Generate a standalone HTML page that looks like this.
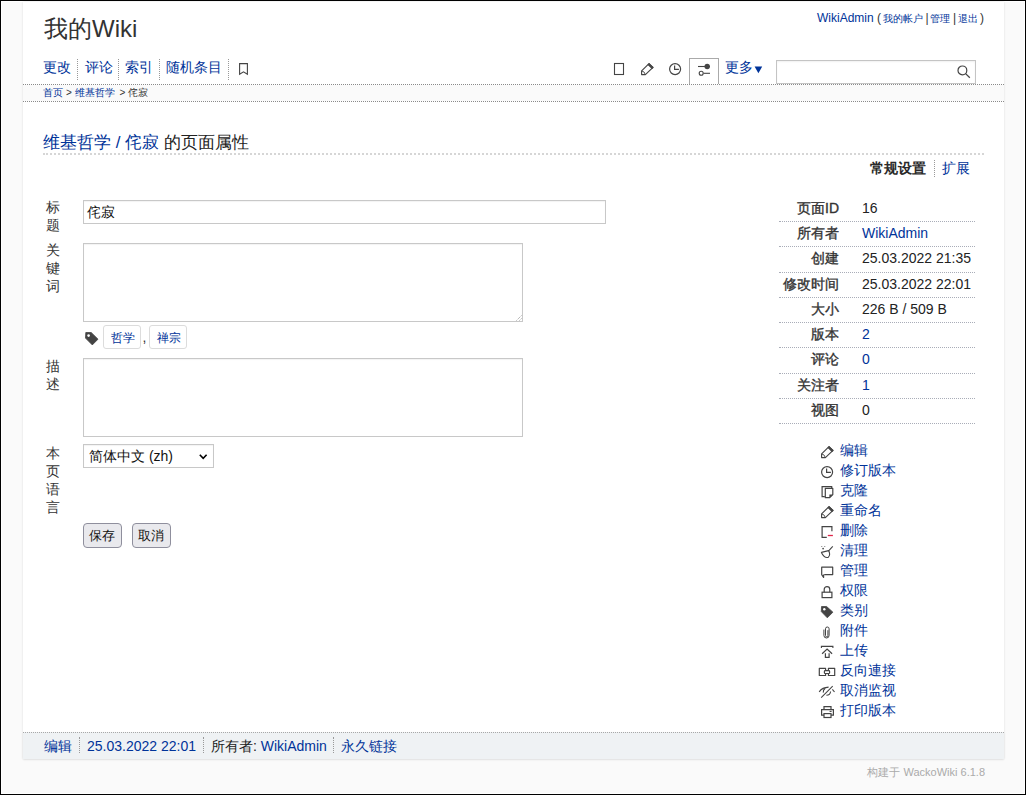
<!DOCTYPE html>
<html lang="zh">
<head>
<meta charset="utf-8">
<title>我的Wiki</title>
<style>
html,body{margin:0;padding:0;}
body{position:relative;width:1026px;height:795px;overflow:hidden;background:#000;font-family:"Liberation Sans",sans-serif;font-size:14px;color:#333;}
#frame{position:absolute;left:1px;top:1px;width:1024px;height:793px;background:#fff;}
#bodybg{position:absolute;left:2px;top:2px;width:1022px;height:791px;background:#fafafa;}
#page{position:absolute;left:23px;top:2px;width:981px;height:757px;background:#fff;box-shadow:0 0 2px rgba(0,0,0,0.12);}
a{color:#039;text-decoration:none;}
.t{position:absolute;white-space:nowrap;}
.vsep{position:absolute;width:0;border-left:1px dotted #999;}
.hdot{position:absolute;height:0;border-top:1px dotted #8a8a8a;}
svg{position:absolute;overflow:visible;}
.ic{fill:none;stroke:#444;stroke-width:1.1;}
.lbl{font-size:14px;line-height:20px;color:#333;-webkit-text-stroke:0.35px #333;}
.val{font-size:14px;line-height:20px;color:#222;}
.tdot{position:absolute;left:779px;width:196px;height:0;border-top:1px dotted #a9adb8;}
</style>
</head>
<body>
<div id="frame"></div>
<div id="bodybg"></div>
<div id="page"></div>
<svg width="0" height="0" style="position:absolute;left:0;top:0">
<defs>
<symbol id="i-pencil" viewBox="0 0 13 13" overflow="visible"><path d="M0.6 11.6V7.9L8 0.6L12 4.4L4.4 11.6Z" fill="none" stroke="#444" stroke-width="1.15" stroke-linejoin="round"/><path d="M6.9 1.7L8 0.4L12.3 4.5L11 5.7Z" fill="#444" stroke="#444" stroke-width="0.8"/><path d="M1 8.1Q3.6 8.4 4.1 11.2" fill="none" stroke="#444" stroke-width="0.9"/></symbol>
<symbol id="i-clock" viewBox="0 0 13 13" overflow="visible"><circle cx="6.1" cy="6.1" r="5.5" fill="none" stroke="#444" stroke-width="1.2"/><path d="M5.6 2.4V6.4H9.9" fill="none" stroke="#444" stroke-width="1.2"/></symbol>
<symbol id="i-clone" viewBox="0 0 13 13" overflow="visible"><path d="M3.8 10.7H1.1V0.6H10.7V2.4" fill="none" stroke="#444" stroke-width="1.2"/><path d="M4.3 2.4H11.8V8.6L8.7 11.7H4.3Z" fill="#fff" stroke="#444" stroke-width="1.2" stroke-linejoin="round"/><path d="M8.4 11.9V8.4H12Z" fill="#444"/></symbol>
<symbol id="i-del" viewBox="0 0 13 13" overflow="visible"><path d="M5.8 11.3H1.1V0.6H10.9V5.3" fill="none" stroke="#444" stroke-width="1.2"/><path d="M6.8 9.5H11.9" stroke="#e0264a" stroke-width="1.3"/></symbol>
<symbol id="i-purge" viewBox="0 0 13 13" overflow="visible"><path d="M0.4 6.4L7.6 4.6Q9.8 8.4 7.4 11.2Q3.4 12.6 0.4 6.4Z" fill="none" stroke="#444" stroke-width="1.1" stroke-linejoin="round"/><path d="M7.6 4.8L11.8 0.4" stroke="#444" stroke-width="1.1"/><circle cx="0.8" cy="0.5" r="0.55" fill="#666"/><circle cx="3.8" cy="0.5" r="0.55" fill="#666"/><circle cx="2.1" cy="2.6" r="0.85" fill="#444"/></symbol>
<symbol id="i-manage" viewBox="0 0 13 13" overflow="visible"><path d="M3.3 8.6H11.7V1.2H0.7V8.6L2.6 11.4V8.6" fill="none" stroke="#444" stroke-width="1.2" stroke-linejoin="round"/></symbol>
<symbol id="i-lock" viewBox="0 0 13 13" overflow="visible"><path d="M3.2 6.2V3.4A2.8 2.8 0 0 1 8.8 3.4V6.2" fill="none" stroke="#444" stroke-width="1.2"/><rect x="1.1" y="6.2" width="9.8" height="5.4" fill="none" stroke="#444" stroke-width="1.2"/></symbol>
<symbol id="i-tag" viewBox="0 0 13 13" overflow="visible"><path d="M0.5 0.5H5.6L11.9 6.2L6.3 11.8L0.3 5.6Z" fill="#444" stroke="#444" stroke-width="0.8" stroke-linejoin="round"/><circle cx="3.3" cy="3.3" r="1.2" fill="#fff"/></symbol>
<symbol id="i-clip" viewBox="0 0 13 13" overflow="visible"><path d="M6.9 4.2V9.6A1.2 1.2 0 0 1 4.5 9.6V2.8A1.8 1.8 0 0 1 8.1 2.8V9.4A2.6 2.6 0 0 1 2.9 9.4V3.6" fill="none" stroke="#444" stroke-width="1"/></symbol>
<symbol id="i-upload" viewBox="0 0 13 13" overflow="visible"><path d="M0.4 2.1V0.4H11.9V2.1" fill="none" stroke="#444" stroke-width="1.1"/><path d="M1.1 7.7L6.1 3L11.1 7.7" fill="none" stroke="#444" stroke-width="1.2"/><path d="M4.4 7.2V11.4H8.1V7.2" fill="none" stroke="#444" stroke-width="1.2"/></symbol>
<symbol id="i-links" viewBox="0 0 13 13" overflow="visible"><path d="M4.6 4.5V2.4H-1.7V9.5H4.6V7.6" fill="none" stroke="#444" stroke-width="1.2" stroke-linejoin="round"/><rect x="3.4" y="4.6" width="5.2" height="2.9" rx="0.8" fill="none" stroke="#444" stroke-width="1.2"/><path d="M7.4 4.5V2.4H13.7V9.5H7.4V7.6" fill="none" stroke="#444" stroke-width="1.2" stroke-linejoin="round"/></symbol>
<symbol id="i-eye" viewBox="0 0 13 13" overflow="visible"><path d="M0.2 11.7L11.7 0.2" stroke="#444" stroke-width="1.1"/><path d="M-1.8 5.8Q1.4 1.5 7.6 1.2" fill="none" stroke="#444" stroke-width="1.2"/><path d="M2.3 6.6Q2 3.9 4.2 2.2" fill="none" stroke="#444" stroke-width="1.1"/><path d="M5.4 9.3Q9.2 9.2 9.6 5.5" fill="none" stroke="#444" stroke-width="1.1"/><path d="M11.4 3.4L13.5 6" stroke="#444" stroke-width="1.1"/></symbol>
<symbol id="i-print" viewBox="0 0 13 13" overflow="visible"><path d="M3 3.3V0.6H10V3.3" fill="none" stroke="#444" stroke-width="1.2"/><path d="M3 9.2H0.6V3.6H12.4V9.2H10" fill="none" stroke="#444" stroke-width="1.2"/><rect x="3" y="7.6" width="7" height="3.9" fill="none" stroke="#444" stroke-width="1.2"/><path d="M8.6 5.4H10.6" stroke="#444" stroke-width="1.1"/></symbol>
</defs>
</svg>


<!-- ===== header ===== -->
<div class="t" style="left:44px;top:14px;font-size:24px;line-height:30px;color:#333;">我的Wiki</div>
<div class="t" style="left:817px;top:9px;font-size:12px;line-height:18px;"><a href="#">WikiAdmin</a></div>
<div class="t" style="left:877px;top:9px;font-size:12px;line-height:18px;color:#333;">(</div>
<div class="t" style="left:883px;top:10px;font-size:10px;line-height:18px;"><a href="#">我的帐户</a></div>
<div class="t" style="left:925.5px;top:9px;font-size:12px;line-height:18px;color:#333;">|</div>
<div class="t" style="left:930px;top:10px;font-size:10px;line-height:18px;"><a href="#">管理</a></div>
<div class="t" style="left:953px;top:9px;font-size:12px;line-height:18px;color:#333;">|</div>
<div class="t" style="left:957.5px;top:10px;font-size:10px;line-height:18px;"><a href="#">退出</a></div>
<div class="t" style="left:980px;top:9px;font-size:12px;line-height:18px;color:#333;">)</div>

<!-- nav left -->
<div class="t" style="left:43px;top:57px;font-size:14px;line-height:20px;"><a href="#">更改</a></div>
<div class="vsep" style="left:77px;top:59px;height:21px;"></div>
<div class="t" style="left:85px;top:57px;font-size:14px;line-height:20px;"><a href="#">评论</a></div>
<div class="vsep" style="left:118px;top:59px;height:21px;"></div>
<div class="t" style="left:125px;top:57px;font-size:14px;line-height:20px;"><a href="#">索引</a></div>
<div class="vsep" style="left:159px;top:59px;height:21px;"></div>
<div class="t" style="left:166px;top:57px;font-size:14px;line-height:20px;"><a href="#">随机条目</a></div>
<div class="vsep" style="left:228px;top:59px;height:21px;"></div>
<svg style="left:239px;top:63px" width="9" height="12" viewBox="0 0 9 12"><path class="ic" d="M0.6 0.6H8.4V11.3L4.5 8.8L0.6 11.3Z"/></svg>

<!-- nav right icons -->
<svg style="left:614px;top:63px" width="11" height="12" viewBox="0 0 11 12"><rect x="0.5" y="0.5" width="9" height="11" fill="none" stroke="#444" stroke-width="1.1"/></svg>
<svg style="left:641px;top:63px" width="13" height="13" viewBox="0 0 13 13"><use href="#i-pencil"/></svg>
<svg style="left:669px;top:63px" width="13" height="13" viewBox="0 0 13 13"><use href="#i-clock"/></svg>
<div style="position:absolute;left:689px;top:58px;width:28px;height:25px;border:1px solid #aaa;border-bottom:none;background:#fff;"></div>
<svg style="left:697px;top:63px" width="15" height="13" viewBox="0 0 15 13"><path class="ic" d="M1 3.5H13"/><circle cx="10.2" cy="3.5" r="2.7" fill="#444"/><path class="ic" d="M6.5 10.3H13"/><circle class="ic" cx="4.2" cy="10.3" r="2.0" fill="#fff"/></svg>
<div class="t" style="left:725px;top:57px;font-size:14px;line-height:20px;"><a href="#">更多</a></div>
<svg style="left:754px;top:66px" width="9" height="8" viewBox="0 0 9 8"><path d="M0.6 0.4H8.2L4.4 7.2Z" fill="#039"/></svg>
<div style="position:absolute;left:776px;top:60px;width:198px;height:22px;border:1px solid #c4c4c4;background:#fff;box-shadow:inset 0 1px 2px rgba(0,0,0,0.06);"></div>
<svg style="left:957px;top:65px" width="14" height="14" viewBox="0 0 14 14"><circle class="ic" cx="5.4" cy="5.4" r="4.4" style="stroke-width:1.2"/><path class="ic" d="M8.6 8.6L12.8 12.8" style="stroke-width:1.3"/></svg>

<div class="hdot" style="left:23px;top:84px;width:981px;"></div>
<div style="position:absolute;left:23px;top:85px;width:981px;height:16px;background:#fafafa;"></div>
<div class="hdot" style="left:23px;top:101px;width:981px;"></div>
<div class="t" style="left:42.5px;top:85px;font-size:10px;line-height:16px;"><a href="#">首页</a></div>
<div class="t" style="left:66px;top:85px;font-size:10px;line-height:16px;color:#333;">&gt;</div>
<div class="t" style="left:74.5px;top:85px;font-size:10px;line-height:16px;"><a href="#">维基哲学</a></div>
<div class="t" style="left:119.5px;top:85px;font-size:10px;line-height:16px;color:#333;">&gt;</div>
<div class="t" style="left:127.5px;top:85px;font-size:10px;line-height:16px;color:#333;">侘寂</div>

<!-- ===== title ===== -->
<div class="t" style="left:43px;top:132px;font-size:17px;line-height:22px;color:#222;"><a href="#">维基哲学</a> <a href="#">/</a> <a href="#">侘寂</a> 的页面属性</div>
<div style="position:absolute;left:43px;top:153px;width:941px;height:0;border-top:2px dotted #d6d6d6;"></div>

<!-- tabs -->
<div class="t" style="left:870px;top:158px;font-size:14px;line-height:20px;color:#2a2a2a;font-weight:bold;">常规设置</div>
<div class="vsep" style="left:934px;top:160px;height:17px;"></div>
<div class="t" style="left:942px;top:158px;font-size:14px;line-height:20px;"><a href="#">扩展</a></div>

<!-- ===== form ===== -->
<div class="t" style="left:46px;top:198px;font-size:14px;line-height:18.3px;color:#333;white-space:normal;width:16px;">标题</div>
<div style="position:absolute;left:83px;top:200px;width:521px;height:22px;border:1px solid #c8c8c8;background:#fff;box-shadow:inset 0 1px 1px rgba(0,0,0,0.05);"></div>
<div class="t" style="left:87px;top:202px;font-size:14px;line-height:20px;color:#111;">侘寂</div>

<div class="t" style="left:46px;top:240.5px;font-size:14px;line-height:18.3px;color:#333;white-space:normal;width:16px;">关键词</div>
<div style="position:absolute;left:83px;top:243px;width:438px;height:77px;border:1px solid #c8c8c8;background:#fff;box-shadow:inset 0 1px 1px rgba(0,0,0,0.05);"></div>

<svg style="left:515px;top:314px" width="8" height="8" viewBox="0 0 8 8"><path d="M1.5 6.5L6.5 1.5M4.5 6.5L6.5 4.5" stroke="#888" stroke-width="0.9" stroke-dasharray="1 1"/></svg>
<svg style="left:515px;top:429px" width="8" height="8" viewBox="0 0 8 8"><path d="M1.5 6.5L6.5 1.5M4.5 6.5L6.5 4.5" stroke="#888" stroke-width="0.9" stroke-dasharray="1 1"/></svg>
<svg style="left:84.5px;top:332px" width="14" height="14" viewBox="0 0 14 14"><path d="M0.8 0.5H6.2L13 7.2L7.3 12.9L0.5 6.1Z" fill="#444" stroke="#444" stroke-width="0.8" stroke-linejoin="round"/><circle cx="3.6" cy="3.6" r="1.3" fill="#fff"/></svg>
<div style="position:absolute;left:103px;top:325px;width:36px;height:22px;border:1px solid #dcdcdc;border-radius:3px;background:#fff;"></div>
<div class="t" style="left:110.5px;top:328px;font-size:12px;line-height:20px;"><a href="#">哲学</a></div>
<div class="t" style="left:142.5px;top:327px;font-size:14px;line-height:20px;color:#333;">,</div>
<div style="position:absolute;left:149px;top:325px;width:36px;height:22px;border:1px solid #dcdcdc;border-radius:3px;background:#fff;"></div>
<div class="t" style="left:156.5px;top:328px;font-size:12px;line-height:20px;"><a href="#">禅宗</a></div>

<div class="t" style="left:46px;top:356.5px;font-size:14px;line-height:18.3px;color:#333;white-space:normal;width:16px;">描述</div>
<div style="position:absolute;left:83px;top:358px;width:438px;height:77px;border:1px solid #c8c8c8;background:#fff;box-shadow:inset 0 1px 1px rgba(0,0,0,0.05);"></div>

<div class="t" style="left:46px;top:444px;font-size:14px;line-height:18.1px;color:#333;white-space:normal;width:16px;">本页语言</div>
<div style="position:absolute;left:83px;top:444px;width:129px;height:22px;border:1px solid #c8c8c8;background:#fff;box-shadow:inset 0 1px 1px rgba(0,0,0,0.05);"></div>
<div class="t" style="left:89px;top:446px;font-size:14px;line-height:20px;color:#111;">简体中文 (zh)</div>
<svg style="left:199px;top:453.5px" width="9" height="6" viewBox="0 0 9 6"><path d="M0.8 0.8L4.2 4.3L7.6 0.8" fill="none" stroke="#000" stroke-width="1.6"/></svg>

<div style="position:absolute;left:83px;top:523px;width:37px;height:23px;border:1px solid #8f8f9d;border-radius:4px;background:#e9e9ed;"></div>
<div class="t" style="left:89px;top:526px;font-size:13.33px;line-height:20px;color:#111;">保存</div>
<div style="position:absolute;left:132px;top:523px;width:37px;height:23px;border:1px solid #8f8f9d;border-radius:4px;background:#e9e9ed;"></div>
<div class="t" style="left:138px;top:526px;font-size:13.33px;line-height:20px;color:#111;">取消</div>

<!-- ===== info table ===== -->
<div class="t lbl" style="right:187px;top:197.75px;">页面ID</div>
<div class="t val" style="left:862px;top:197.75px;">16</div>
<div class="tdot" style="top:221.00px;"></div>
<div class="t lbl" style="right:187px;top:223.00px;">所有者</div>
<div class="t val" style="left:862px;top:223.00px;"><a href="#">WikiAdmin</a></div>
<div class="tdot" style="top:246.25px;"></div>
<div class="t lbl" style="right:187px;top:248.25px;">创建</div>
<div class="t val" style="left:862px;top:248.25px;">25.03.2022 21:35</div>
<div class="tdot" style="top:271.50px;"></div>
<div class="t lbl" style="right:187px;top:273.50px;">修改时间</div>
<div class="t val" style="left:862px;top:273.50px;">25.03.2022 22:01</div>
<div class="tdot" style="top:296.75px;"></div>
<div class="t lbl" style="right:187px;top:298.75px;">大小</div>
<div class="t val" style="left:862px;top:298.75px;">226 B / 509 B</div>
<div class="tdot" style="top:322.00px;"></div>
<div class="t lbl" style="right:187px;top:324.00px;">版本</div>
<div class="t val" style="left:862px;top:324.00px;"><a href="#">2</a></div>
<div class="tdot" style="top:347.25px;"></div>
<div class="t lbl" style="right:187px;top:349.25px;">评论</div>
<div class="t val" style="left:862px;top:349.25px;"><a href="#">0</a></div>
<div class="tdot" style="top:372.50px;"></div>
<div class="t lbl" style="right:187px;top:374.50px;">关注者</div>
<div class="t val" style="left:862px;top:374.50px;"><a href="#">1</a></div>
<div class="tdot" style="top:397.75px;"></div>
<div class="t lbl" style="right:187px;top:399.75px;">视图</div>
<div class="t val" style="left:862px;top:399.75px;">0</div>
<div class="tdot" style="top:423.00px;"></div>
<!-- ===== actions ===== -->
<svg style="left:821px;top:446px" width="13" height="13" viewBox="0 0 13 13"><use href="#i-pencil"/></svg>
<div class="t" style="left:840px;top:440px;font-size:14px;line-height:20px;"><a href="#">编辑</a></div>
<svg style="left:821px;top:466px" width="13" height="13" viewBox="0 0 13 13"><use href="#i-clock"/></svg>
<div class="t" style="left:840px;top:460px;font-size:14px;line-height:20px;"><a href="#">修订版本</a></div>
<svg style="left:821px;top:486px" width="13" height="13" viewBox="0 0 13 13"><use href="#i-clone"/></svg>
<div class="t" style="left:840px;top:480px;font-size:14px;line-height:20px;"><a href="#">克隆</a></div>
<svg style="left:821px;top:506px" width="13" height="13" viewBox="0 0 13 13"><use href="#i-pencil"/></svg>
<div class="t" style="left:840px;top:500px;font-size:14px;line-height:20px;"><a href="#">重命名</a></div>
<svg style="left:821px;top:526px" width="13" height="13" viewBox="0 0 13 13"><use href="#i-del"/></svg>
<div class="t" style="left:840px;top:520px;font-size:14px;line-height:20px;"><a href="#">删除</a></div>
<svg style="left:821px;top:546px" width="13" height="13" viewBox="0 0 13 13"><use href="#i-purge"/></svg>
<div class="t" style="left:840px;top:540px;font-size:14px;line-height:20px;"><a href="#">清理</a></div>
<svg style="left:821px;top:566px" width="13" height="13" viewBox="0 0 13 13"><use href="#i-manage"/></svg>
<div class="t" style="left:840px;top:560px;font-size:14px;line-height:20px;"><a href="#">管理</a></div>
<svg style="left:821px;top:586px" width="13" height="13" viewBox="0 0 13 13"><use href="#i-lock"/></svg>
<div class="t" style="left:840px;top:580px;font-size:14px;line-height:20px;"><a href="#">权限</a></div>
<svg style="left:821px;top:606px" width="13" height="13" viewBox="0 0 13 13"><use href="#i-tag"/></svg>
<div class="t" style="left:840px;top:600px;font-size:14px;line-height:20px;"><a href="#">类别</a></div>
<svg style="left:821px;top:626px" width="13" height="13" viewBox="0 0 13 13"><use href="#i-clip"/></svg>
<div class="t" style="left:840px;top:620px;font-size:14px;line-height:20px;"><a href="#">附件</a></div>
<svg style="left:821px;top:646px" width="13" height="13" viewBox="0 0 13 13"><use href="#i-upload"/></svg>
<div class="t" style="left:840px;top:640px;font-size:14px;line-height:20px;"><a href="#">上传</a></div>
<svg style="left:821px;top:666px" width="13" height="13" viewBox="0 0 13 13"><use href="#i-links"/></svg>
<div class="t" style="left:840px;top:660px;font-size:14px;line-height:20px;"><a href="#">反向連接</a></div>
<svg style="left:821px;top:686px" width="13" height="13" viewBox="0 0 13 13"><use href="#i-eye"/></svg>
<div class="t" style="left:840px;top:680px;font-size:14px;line-height:20px;"><a href="#">取消监视</a></div>
<svg style="left:821px;top:706px" width="13" height="13" viewBox="0 0 13 13"><use href="#i-print"/></svg>
<div class="t" style="left:840px;top:700px;font-size:14px;line-height:20px;"><a href="#">打印版本</a></div>

<!-- ===== footer ===== -->
<div style="position:absolute;left:23px;top:732px;width:981px;height:26px;border-top:1px dotted #a8a8a8;background:#eff2f4;box-shadow:0 1px 2px rgba(0,0,0,0.06);"></div>
<div class="t" style="left:44px;top:735.5px;font-size:14px;line-height:20px;"><a href="#">编辑</a></div>
<div class="vsep" style="left:79px;top:737px;height:16px;"></div>
<div class="t" style="left:87px;top:735.5px;font-size:14px;line-height:20px;"><a href="#">25.03.2022 22:01</a></div>
<div class="vsep" style="left:203px;top:737px;height:16px;"></div>
<div class="t" style="left:211px;top:735.5px;font-size:14px;line-height:20px;color:#222;">所有者: <a href="#">WikiAdmin</a></div>
<div class="vsep" style="left:333px;top:737px;height:16px;"></div>
<div class="t" style="left:341px;top:735.5px;font-size:14px;line-height:20px;"><a href="#">永久链接</a></div>
<div class="t" style="right:41px;top:764px;font-size:11px;line-height:16px;color:#aaa;">构建于 WackoWiki 6.1.8</div>

</body>
</html>
